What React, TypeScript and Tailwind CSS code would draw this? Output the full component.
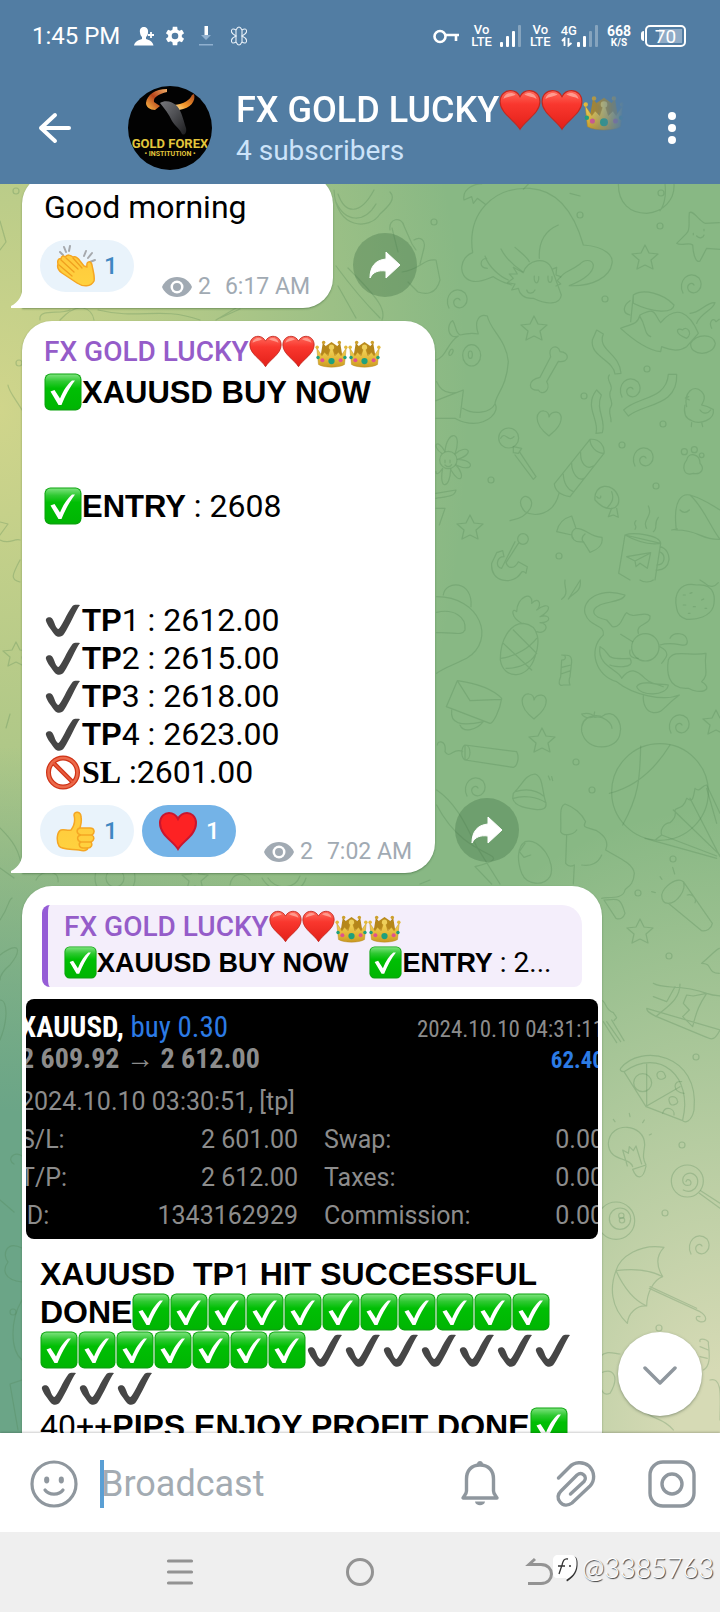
import type { ReactNode } from 'react';

const SANS = "font-['Roboto','Liberation_Sans',sans-serif]";

type EmojiName = 'heart' | 'crown' | 'check' | 'tick' | 'ban';

const emojiArt: Record<EmojiName, ReactNode> = {
  heart: (
    <>
      <path
        d="M19 36.500C14.500 28.500 1 22 1 11.500C1 5 5.500 1.500 10.500 1.500C14.500 1.500 17.500 4 19 7C20.500 4 23.500 1.500 27.500 1.500C32.500 1.500 37 5 37 11.500C37 22 23.500 28.500 19 36.500Z"
        fill="url(#heartFill)"
        stroke="#c2281f"
        strokeWidth="1"
      />
      <path d="M4 9C5 4 11 2 15 5C12 7 7 7 4 9ZM34 9C33 4 27 2 23 5C26 7 31 7 34 9Z" fill="#ffb0a4" opacity=".75" />
    </>
  ),
  crown: (
    <>
      <path d="M12 13L19 8L26 13L23 27H15Z" fill="#b98a1c" />
      <path d="M9 9L16 17L12 27H6ZM29 9L22 17L26 27H32Z" fill="#b5861a" />
      <path
        d="M2 15L8 24L11 20L15 24L18 15H20L23 24L27 20L30 24L36 15L34 34C28 38 10 38 4 34Z"
        fill="url(#goldFill)"
        stroke="#b5851b"
        strokeWidth=".5"
      />
      <circle cx="2.500" cy="14" r="2" fill="#e3b93b" />
      <circle cx="35.500" cy="14" r="2" fill="#e3b93b" />
      <circle cx="10" cy="8.500" r="2" fill="#cda02d" />
      <circle cx="28" cy="8.500" r="2" fill="#cda02d" />
      <circle cx="19" cy="14" r="3" fill="#eecf5b" />
      <circle cx="19" cy="30" r="3.600" fill="#1fa07c" />
      <circle cx="8.500" cy="29" r="2.300" fill="#e0528d" />
      <circle cx="29.500" cy="29" r="2.300" fill="#e0528d" />
      <circle cx="3.500" cy="26" r="2" fill="#1fa07c" />
      <circle cx="34.500" cy="26" r="2" fill="#1fa07c" />
    </>
  ),
  check: (
    <>
      <rect x=".500" y=".500" width="37" height="37" rx="6" fill="#0aa40d" />
      <rect x="1.500" y="1.500" width="35" height="34.500" rx="5" fill="url(#greenFill)" />
      <path d="M6.500 18.500L10.500 17L16 25.500C19.500 17 23.500 11.500 28 7.500H31C26 14 21 23 17.500 32H14.500Z" fill="#fff" />
    </>
  ),
  tick: (
    <path
      d="M2 20C1 16 7 15 8.500 18C10.500 21 12 28 14.500 28C17.500 26 23 12 28.500 5C29.500 3.500 33 3.500 36 4C32 9 25.500 25 20 33C18 36.500 13 36.500 11 34C8 30 3 24 2 20Z"
      fill="#464646"
    />
  ),
  ban: (
    <>
      <circle cx="19" cy="19.500" r="14.500" fill="#fff" stroke="#cf3317" strokeWidth="5" />
      <path d="M9 9.500L29 29.500" stroke="#cf3317" strokeWidth="4.500" />
      <circle cx="19" cy="19.500" r="14.500" fill="none" stroke="#ec6a4b" strokeWidth="2.500" />
      <path d="M9 9.500L29 29.500" stroke="#e8593b" strokeWidth="2" />
    </>
  ),
};

const emojiLabel: Record<EmojiName, string> = {
  heart: 'red heart',
  crown: 'crown',
  check: 'check mark button',
  tick: 'check mark',
  ban: 'prohibited',
};

const emojiSize = {
  sm: 'size-[33px] align-[-7px]',
  md: 'size-[38px] align-[-8px]',
  lg: 'size-[42px] align-[-9px]',
};

function Emoji({ name, size = 'md', count = 1 }: { name: EmojiName; size?: keyof typeof emojiSize; count?: number }) {
  return (
    <>
      {Array.from({ length: count }, (_, i) => (
        <svg key={i} viewBox="0 0 38 38" role="img" aria-label={emojiLabel[name]} className={`inline-block ${emojiSize[size]}`}>
          {emojiArt[name]}
        </svg>
      ))}
    </>
  );
}

function Gradients() {
  return (
    <svg width="0" height="0" className="absolute" aria-hidden="true">
      <defs>
        <linearGradient id="heartFill" x1="0" y1="0" x2="0" y2="1">
          <stop offset="0" stopColor="#ff6a5c" />
          <stop offset=".35" stopColor="#f9372e" />
          <stop offset="1" stopColor="#e32019" />
        </linearGradient>
        <linearGradient id="goldFill" x1="0" y1="0" x2="0" y2="1">
          <stop offset="0" stopColor="#f4d65c" />
          <stop offset=".6" stopColor="#e2b535" />
          <stop offset="1" stopColor="#c99a22" />
        </linearGradient>
        <linearGradient id="greenFill" x1="0" y1="0" x2="0" y2="1">
          <stop offset="0" stopColor="#7be27c" />
          <stop offset=".2" stopColor="#2fc932" />
          <stop offset=".4" stopColor="#00bf04" />
          <stop offset="1" stopColor="#00b503" />
        </linearGradient>
        <linearGradient id="hornLeft" x1="1" y1="0" x2="0" y2="1">
          <stop offset="0" stopColor="#f0b06a" />
          <stop offset=".5" stopColor="#b8441a" />
          <stop offset="1" stopColor="#ffc04a" />
        </linearGradient>
        <linearGradient id="hornRight" x1="1" y1="0" x2="0" y2="1">
          <stop offset="0" stopColor="#a8481c" />
          <stop offset=".6" stopColor="#f59a2c" />
          <stop offset="1" stopColor="#fff0b0" />
        </linearGradient>
        <linearGradient id="bullHead" x1="0" y1="0" x2="1" y2="1">
          <stop offset="0" stopColor="#77787c" />
          <stop offset=".5" stopColor="#4c4d51" />
          <stop offset="1" stopColor="#1c1c1e" />
        </linearGradient>
        <linearGradient id="handFill" x1="0" y1="0" x2="0" y2="1">
          <stop offset="0" stopColor="#ffc93c" />
          <stop offset="1" stopColor="#ffd23f" />
        </linearGradient>
      </defs>
    </svg>
  );
}

function Signal({ bars }: { bars: number }) {
  return (
    <svg viewBox="0 0 22 22" className="size-[22px]" aria-hidden="true">
      {[5, 11, 16, 22].map((h, i) => (
        <rect key={h} x={i * 6} y={22 - h} width="3" height={h} rx="1" fill="#fff" opacity={i < bars ? 1 : 0.3} />
      ))}
    </svg>
  );
}

function VoLte() {
  return (
    <div className="text-center text-[13px] leading-[12px] font-medium">
      <div>Vo</div>
      <div>LTE</div>
    </div>
  );
}

function StatusBar() {
  return (
    <div className="flex h-[72px] items-center pr-[34px] pl-8 text-white">
      <span className="text-2xl">1:45 PM</span>
      <svg viewBox="0 0 20 20" className="ml-3.5 size-5" fill="#fff" aria-hidden="true">
        <path d="M10 1C6.500 1 5.500 3.500 6 6.500C6.200 8.500 7 10 8 11V13C4 14.200 1 15.500 0 19.500H19.500C18.500 15.500 16 14.200 12 13V11C13.200 10 14 8.500 14 6.500C14.500 3.500 13 1 10 1Z" />
        <path d="M17 6V12M14 9H20" stroke="#fff" strokeWidth="1.800" />
      </svg>
      <svg viewBox="0 0 24 24" className="ml-2.5 size-[22px]" fill="#fff" aria-hidden="true">
        <path d="M19.400 13c0-.300.100-.700.100-1s0-.700-.100-1l2.500-1.900-2.300-4-2.900 1.200c-.600-.500-1.200-.900-1.900-1.100L14.400 2H9.600l-.400 3.200c-.700.300-1.300.600-1.900 1.100L4.400 5.100l-2.300 4L4.600 11c0 .300-.100.700-.100 1s0 .700.100 1l-2.500 1.900 2.300 4 2.900-1.200c.600.500 1.200.900 1.900 1.100l.400 3.200h4.800l.400-3.200c.700-.300 1.300-.600 1.900-1.100l2.900 1.200 2.300-4zM12 15.600a3.600 3.600 0 1 1 0-7.200 3.600 3.600 0 0 1 0 7.200z" />
      </svg>
      <svg viewBox="0 0 16 22" className="ml-3 h-[22px] w-4" aria-hidden="true">
        <path d="M6.500 1H10V10H6.500Z" fill="#fff" />
        <path d="M3 10H13L8 15ZM1 19H15V20.500H1Z" fill="#8fb0cf" />
      </svg>
      <svg viewBox="0 0 18 20" className="ml-4 h-5 w-[18px]" fill="none" stroke="#e8f0f8" strokeWidth="1.100" aria-hidden="true">
        <path d="M6 4C7 2 8 1 9 1S11 2 12 4M6 16C7 18 8 19 9 19S11 18 12 16M6 4V16M12 4V16" />
        <path d="M6 4C3 2 1 3 1.500 6C2 8 4 9 6 10C4 11 2 12 1.500 14C1 17 3 18 6 16M12 4C15 2 17 3 16.500 6C16 8 14 9 12 10C14 11 16 12 16.500 14C17 17 15 18 12 16" />
      </svg>
      <svg viewBox="0 0 26 15" className="ml-auto h-[15px] w-[26px]" fill="none" stroke="#fff" strokeWidth="2.600" aria-hidden="true">
        <circle cx="7" cy="7.500" r="5.500" />
        <path d="M12.500 6H26M23 6V12" />
      </svg>
      <div className="ml-3 flex items-center gap-2">
        <VoLte />
        <Signal bars={3} />
        <VoLte />
      </div>
      <div className="ml-2.5 flex items-end">
        <div className="text-[13px] leading-[12px] font-medium">
          <div>4G</div>
          <svg viewBox="0 0 12 10" className="h-2.5 w-3" fill="none" stroke="#fff" strokeWidth="1.800" aria-hidden="true">
            <path d="M1 4L3.500 1.500V9M7.500 1V8.500L10.500 6" />
          </svg>
        </div>
        <Signal bars={2} />
      </div>
      <div className="ml-2 text-center font-bold">
        <div className="text-sm leading-[13px]">668</div>
        <div className="text-[10px] leading-[10px]">K/S</div>
      </div>
      <div className="ml-2.5 flex items-center gap-px">
        <span className="h-2.5 w-[3px] rounded-l-sm bg-white" />
        <span className="flex h-[22px] w-[41px] rounded-[5px] border-2 border-white p-0.5">
          <span className="flex-1 bg-linear-to-r from-transparent from-30% to-[#8fabc6] to-30% text-center text-[19px] leading-4">70</span>
        </span>
      </div>
    </div>
  );
}

function Avatar() {
  return (
    <svg viewBox="0 0 84 84" className="size-[84px] shrink-0 rounded-full" role="img" aria-label="Gold Forex Institution">
      <rect width="84" height="84" fill="#020202" />
      <path d="M39 3C27 3 19 9 18 17C18 21 22 24 27 24L32 20L26 16C25 11 31 8 39 6Z" fill="url(#hornLeft)" />
      <path d="M66 8C68 15 63 22 51 24L46 19C56 18 62 14 64 9Z" fill="url(#hornRight)" />
      <path d="M32 17C37 14 44 15 49 20C54 26 55 33 58 42C59 46 57 50 54 48C52 43 47 40 44 35C41 28 36 22 32 17Z" fill="url(#bullHead)" />
      <text x="42" y="62" textAnchor="middle" fontSize="13" fontWeight="700" fill="#e3c63c" fontFamily="Roboto, sans-serif">
        GOLD FOREX
      </text>
      <text x="42" y="70" textAnchor="middle" fontSize="7" fontWeight="700" fill="#e3c63c" fontFamily="Roboto, sans-serif">
        • INSTITUTION •
      </text>
    </svg>
  );
}

function Header() {
  return (
    <header className="shrink-0 bg-[#527da3]">
      <StatusBar />
      <div className="flex h-28 items-center pl-[38px]">
        <button aria-label="Back" className="text-white">
          <svg viewBox="0 0 34 32" className="h-8 w-[34px]" fill="none" stroke="#fff" strokeWidth="4" strokeLinecap="round" strokeLinejoin="round">
            <path d="M17 3L3 16L17 29M3 16H31" />
          </svg>
        </button>
        <div className="ml-14">
          <Avatar />
        </div>
        <div className="mt-1 ml-6 min-w-0 flex-1">
          <h1 className="max-w-[392px] overflow-hidden mask-r-from-90% text-[36px] leading-[42px] font-medium whitespace-nowrap text-white">
            FX GOLD LUCKY
            <Emoji name="heart" size="lg" count={2} />
            <Emoji name="crown" size="lg" count={2} />
          </h1>
          <p className="text-[28px] leading-10 text-[#cce3f9]">4 subscribers</p>
        </div>
        <button aria-label="More options" className="px-11">
          <svg viewBox="0 0 8 34" className="h-[34px] w-2" fill="#fff">
            <circle cx="4" cy="5" r="4" />
            <circle cx="4" cy="17" r="4" />
            <circle cx="4" cy="29" r="4" />
          </svg>
        </button>
      </div>
    </header>
  );
}

const star = 'M0-12L4-4L13-3L6 3L8 12L0 8L-8 12L-6 3L-13-3L-4-4Z';
const swirl = 'M-7 8C-13-4-1-16 9-7C15 2 6 12-1 6C-5 0 2-4 4 0';
const blossom = 'M0 12C-18-2-12-14-5-13C-1-13 0-9 0-7C2-14 14-14 12-4C11 4 4 8 0 12Z';

const stars = [[645, 257], [534, 328], [470, 527], [542, 740], [640, 931], [16, 654], [195, 878], [716, 722]];
const swirls = [[456, 300], [690, 285], [629, 389], [642, 458], [678, 725], [474, 788], [698, 1246]];
const dots = [[434, 222], [580, 215], [660, 226], [605, 299], [491, 480], [656, 486], [663, 424], [622, 445], [647, 369], [584, 396], [559, 556], [576, 762], [592, 790], [661, 193], [673, 859], [638, 893], [669, 956], [696, 1057], [682, 1145], [665, 1213], [659, 1328], [16, 191], [19, 363], [13, 1312]];

function Doodles() {
  return (
    <svg
      viewBox="0 184 720 1249"
      preserveAspectRatio="xMidYMid slice"
      className="absolute inset-0 size-full"
      fill="none"
      stroke="#4f8250"
      strokeOpacity=".27"
      strokeWidth="1.200"
      strokeLinecap="round"
      strokeLinejoin="round"
      aria-hidden="true"
    >
      {stars.map(([x, y]) => (
        <path key={`s${x}-${y}`} d={star} transform={`translate(${x} ${y})`} />
      ))}
      {swirls.map(([x, y]) => (
        <path key={`w${x}-${y}`} d={swirl} transform={`translate(${x} ${y})`} />
      ))}
      {dots.map(([x, y]) => (
        <circle key={`d${x}-${y}`} cx={x} cy={y} r="3" />
      ))}
      <path d={blossom} transform="translate(549 424)" />
      <path d={blossom} transform="translate(534 707)" />
      {/* right of the first two messages */}
      <g transform="translate(400 180) scale(.33333)" strokeWidth="3.600">
        <path d="M218 218C200 100 280 20 390 25C470 30 520 90 550 195C620 200 640 230 636 250C630 290 580 320 508 317C550 300 580 280 580 255C575 235 550 240 540 252C510 275 490 275 482 292M218 218C180 230 170 290 215 303C240 310 265 295 280 290C300 305 320 310 335 315M255 228C265 260 300 290 325 300M418 235C415 180 440 150 475 135M303 207C320 240 345 260 368 275M345 202C365 220 380 230 388 245M260 235C240 235 235 265 262 265" />
        <path d="M370 278C380 240 440 225 456 268L484 345C480 375 440 375 400 355C370 358 358 340 355 325L335 330L345 312L322 308L340 295L328 282L352 282L340 262L370 278ZM456 268L470 262L468 285L482 290L472 302L482 312L468 318M403 288C400 315 418 315 416 290M444 288C442 315 458 312 456 290M380 330C385 345 400 340 405 330" />
        <path d="M655 12C655 70 690 100 740 100C790 95 825 60 822 12M795 12C800 50 790 80 780 92M192 60C185 20 235 10 245 12M192 60L215 50L220 70L232 55L255 72M370 28L385 12M510 40L540 48" />
        <path d="M868 98C880 90 895 120 915 130L958 128M868 98C865 130 872 150 860 160L830 190C845 200 865 185 878 195C880 230 890 250 900 243L920 205L960 208M880 160V164M912 148V152M890 168C900 178 910 172 912 165" />
        <path d="M700 345C730 325 790 340 822 375C820 400 760 400 700 370ZM700 345L692 425M690 362C670 375 665 400 690 405M662 445C690 430 710 440 720 405C770 380 760 400 782 428C830 370 870 400 895 460L860 500C830 520 800 505 785 500L782 515C740 510 700 480 662 445ZM720 410C740 440 730 460 752 470M870 400C900 400 920 365 945 368C940 390 900 400 890 430M872 490C890 460 940 460 946 490C940 530 870 530 872 490ZM860 475C820 460 830 440 848 450C860 435 880 460 860 475ZM935 445C925 425 940 410 948 425L958 418" />
        <path d="M108 540C140 530 140 490 175 468C140 480 140 430 158 422C170 440 165 455 180 465C200 460 225 460 235 462C220 420 240 400 262 408C270 450 320 480 325 545C320 620 290 640 285 670C300 700 260 730 220 730C190 730 175 720 165 715H108M110 605C130 650 170 640 190 630L108 662M190 632L180 712M188 685C220 705 270 700 285 672" />
        <ellipse cx="215" cy="526" rx="27" ry="32" />
        <ellipse cx="211" cy="524" rx="6" ry="11" />
        <ellipse cx="153" cy="517" rx="5" ry="10" transform="rotate(25 153 517)" />
        <path d="M420 592L452 530C440 500 475 490 480 515C510 515 510 550 475 544L440 605C455 630 425 650 415 630C385 635 380 600 420 592Z" />
        <path d="M590 450L610 462C590 510 660 520 663 580L645 582C640 540 570 530 577 480ZM805 583H830C835 680 730 670 685 708L671 690C710 650 800 660 805 583ZM590 630L604 645C585 690 620 720 607 758L588 760C600 720 550 680 590 630ZM628 585C615 600 642 615 632 632C622 650 642 665 633 680C622 695 635 710 633 725" />
        <path d="M463 912L570 778C600 775 615 800 612 820L510 950C480 945 465 930 463 912ZM570 778C570 800 590 820 612 820M542 818C540 850 560 870 580 858M515 850C515 880 535 905 552 895M490 882C490 910 505 930 520 935M477 940C460 1010 400 1010 375 995C350 970 365 945 380 950C410 960 395 1010 330 1022" />
        <circle cx="326" cy="774" r="30" />
        <path d="M302 775C315 750 325 790 342 770M340 800L365 805L355 820L340 818ZM345 825L400 898L408 890L358 815" />
        <circle cx="145" cy="840" r="26" />
        <path d="M125 820C95 800 110 770 135 815C140 750 190 750 165 822C200 790 230 820 172 838C230 840 220 880 168 855C200 890 180 920 152 868C150 930 115 930 128 865C110 890 108 880 108 875M108 940L168 930C165 950 140 950 108 955M108 985H135L118 1035M135 840V848M150 840V848M135 855C142 862 150 862 155 854" />
        <path d="M860 680C850 640 880 610 905 635C920 650 910 665 905 675C930 680 940 690 940 688C945 720 900 735 875 722C855 715 850 700 855 675M866 650L856 654L868 660M900 690C910 705 925 700 932 690M875 728L874 740M905 728L908 740" />
        <path d="M860 840C865 815 900 820 900 850C915 865 905 885 880 880C850 890 845 860 860 840Z" />
        <circle cx="853" cy="815" r="9" />
        <circle cx="883" cy="809" r="9" />
        <circle cx="905" cy="826" r="7" />
        <path d="M585 960C580 910 640 905 655 950C665 990 620 1000 585 960ZM635 985L625 1010L640 1005L655 1012L650 985M635 935C645 960 630 975 620 985M590 950C596 958 604 955 602 948" />
        <path d="M515 1008L528 1045C560 1045 565 1070 606 1072C610 1095 590 1110 570 1117L550 1085C520 1090 515 1070 515 1065L470 1055C475 1030 490 1015 515 1008ZM528 1045C510 1055 515 1070 520 1075M555 1062C545 1070 545 1080 550 1088" />
        <path d="M675 1065L782 1090L765 1200M675 1065L656 1180L690 1200M675 1065C700 1055 780 1065 782 1090C750 1095 720 1090 675 1065ZM780 1100C820 1110 815 1175 768 1170M778 1115C800 1125 795 1155 770 1155M680 1130L752 1118L742 1165L720 1150L708 1160L705 1143ZM705 1143L750 1120M740 1045C725 1020 760 1010 745 978M705 1048C715 1035 695 1035 708 1022M760 1055C775 1045 760 1030 775 1012" />
        <path d="M815 1050C845 1045 825 1050 828 1040C820 960 845 940 870 945C920 960 940 980 960 990M870 945C910 980 930 1040 960 1078C900 1080 900 1050 828 1050M840 990C850 1000 860 998 868 990" />
        <path d="M355 1090L318 1148C325 1170 345 1165 355 1145L382 1160L378 1180C370 1172 365 1175 362 1180C340 1215 270 1210 275 1150L290 1118L308 1112L312 1130C290 1130 285 1160 305 1165L345 1085" />
        <circle cx="369" cy="1077" r="16" />
      </g>
      {/* right, halfway down */}
      <g transform="translate(400 580) scale(.33333)" strokeWidth="3.600">
        <path d="M130 45C135 0 220 0 213 80M110 50C240 50 290 180 200 235C160 255 130 265 110 280M110 97C160 85 200 110 195 150C185 170 160 155 110 158" />
        <path d="M370 130C420 135 420 190 405 230C385 300 310 300 301 240C300 180 330 130 370 130ZM310 190L395 270M340 150L410 220M302 235C350 230 390 200 410 175M318 265C360 265 395 245 405 225M365 130C330 110 335 80 350 95C350 50 400 30 395 70C420 45 425 80 410 90C450 60 460 90 420 110C455 100 455 130 420 128C450 130 440 165 410 155" />
        <path d="M485 225C500 225 500 240 485 240L482 290C475 305 475 320 490 315L510 315C505 300 510 290 510 290L515 245C515 225 505 225 485 225ZM485 262L513 255M483 282L512 272" />
        <path d="M172 302C230 310 280 330 305 355C300 390 280 430 270 430L139 380ZM172 302L210 362L305 358M155 390C150 430 180 440 250 425M180 435C190 460 230 450 250 425" />
        <path d="M195 495L350 515C360 535 350 560 340 562L195 540ZM195 495C215 495 215 540 195 540C180 530 185 500 195 495ZM188 515C160 500 150 540 135 515C140 480 112 480 112 495" />
        <path d="M545 455C540 400 600 405 605 410C640 380 670 430 660 460C655 510 560 520 545 455ZM584 410C560 418 550 410 545 402C560 398 575 400 584 410C582 405 582 400 584 396M584 412C610 405 635 430 636 445" />
        <path d="M340 640C370 610 375 585 405 582C430 590 425 630 438 670C440 685 430 690 410 689C380 685 345 680 338 655ZM345 635C380 625 410 630 433 650M340 655C370 645 410 650 438 668M445 588L450 600M455 590L458 602" />
        <path d="M675 45C670 65 620 65 600 75C570 90 575 110 620 120L637 140C665 145 668 105 680 98C700 120 735 90 750 108C755 135 705 130 715 160M675 45C600 20 545 60 555 100C570 145 615 130 610 165C560 210 590 290 650 305C700 345 790 365 838 345C790 380 790 400 760 398C740 395 728 375 730 345" />
        <circle cx="736" cy="202" r="41" />
        <path d="M662 163L698 185M780 195C830 180 860 210 862 185C860 155 820 155 810 175M600 200C640 220 600 240 690 235C710 270 640 260 630 255M600 200C590 260 660 270 665 295M805 240C820 205 870 230 918 220C910 270 930 280 905 305C945 330 900 345 865 325C800 330 800 270 805 240ZM690 210C685 230 700 235 715 235M665 295C690 260 710 270 735 295C760 320 790 310 805 315C800 350 720 350 710 320C720 300 770 310 790 320M780 200C820 220 790 240 785 250" />
        <path d="M830 85C820 40 840 5 890 15C950 10 945 60 940 80C930 110 890 120 860 118C840 112 832 100 830 85ZM915 10L900 0M915 10C930 25 945 20 955 8M485 58C510 40 490 20 495 0M541 0C545 40 515 40 505 57ZM850 45H856M870 40L876 38M905 60L911 57M850 75H857M880 80H886M865 100H870M915 85H920" />
        <circle cx="780" cy="636" r="145" />
        <path d="M722 498C720 600 715 650 668 735M810 495C770 560 710 620 628 640M920 615C905 615 900 640 885 625C880 650 880 670 860 655C850 690 830 680 825 690C830 710 820 720 810 728C790 730 780 750 785 765L768 778M920 615L960 700M870 655L960 830M820 690L960 825M785 765L950 828M735 775L950 835M920 625L950 730" />
        <path d="M482 755C485 720 475 680 495 672C520 680 545 700 557 725C545 745 560 740 590 752C620 770 625 790 617 810C650 830 700 850 703 880C700 920 680 920 675 930C670 960 620 950 605 955M482 755C490 770 520 765 530 750M500 765L497 850C505 860 515 860 523 855L520 912M545 855C570 860 595 850 605 825M612 960C650 960 660 945 675 1000C670 1015 660 1020 648 1015Z" />
        <path d="M375 785C420 770 470 850 450 890C430 920 380 915 365 880C350 840 352 800 375 785ZM375 790L358 815L372 832L392 825M110 630C170 670 200 740 230 800L300 912M110 675C160 770 220 800 270 825C300 840 260 850 225 860L275 912" />
        <path d="M785 945C790 920 830 890 850 905L937 1030C935 1045 920 1055 905 1052L805 970C790 970 785 960 785 945ZM850 905C860 930 830 970 805 970M862 945C880 940 890 960 885 968M780 890L786 898M818 862L824 882M755 935L766 938" />
        <path d="M720 0C730 8 750 8 760 0M905 1150C930 1130 945 1110 958 1105M905 1150C940 1150 920 1180 958 1180" />
      </g>
      {/* right, next to the scroll button */}
      <g transform="translate(600 980) scale(.33333)" strokeWidth="3.600">
        <path d="M160 10C190 30 240 10 320 40C350 50 355 45 360 48M360 150C345 180 335 180 320 172L170 110C140 95 140 90 140 85ZM240 12C240 60 200 80 168 110M160 50L200 65L225 20M260 45L280 48L320 40C300 70 290 90 278 140L248 110L268 90L250 70ZM8 62C20 70 15 90 40 98C55 120 50 110 42 122M20 125L62 185M35 120L72 182M10 125L50 188" />
        <path d="M62 265C120 190 300 220 282 390C275 425 255 430 248 422L138 380L72 275C60 275 60 268 62 265ZM72 275C180 200 280 290 248 420M140 252V378L240 320" />
        <circle cx="128" cy="308" r="27" />
        <path d="M172 290C165 275 190 265 195 285C205 295 175 305 172 290ZM208 365C200 345 230 345 232 362C240 370 210 385 208 365ZM245 305C220 300 215 335 252 340M188 400C195 375 225 385 222 405" />
        <path d="M98 560C90 530 25 545 25 490C30 420 135 430 134 495C132 520 125 530 138 555L98 568C110 600 130 600 138 558M82 558L68 510L85 520L88 500L100 512L108 498L125 552M45 425L40 418M90 410L88 400M128 428L133 420M148 465L154 462" />
        <circle cx="262" cy="603" r="48" />
        <path d="M258 605C262 590 280 605 270 615C240 625 240 575 275 580C310 590 290 650 250 630M302 632L360 670M298 640L360 685" />
        <circle cx="48" cy="722" r="56" />
        <circle cx="60" cy="716" r="32" />
        <circle cx="64" cy="707" r="8" />
        <circle cx="66" cy="721" r="8" />
        <path d="M192 802C120 790 60 830 48 872C30 920 30 980 82 1030C85 1000 110 975 140 978C140 940 160 900 188 890C170 860 165 830 192 802ZM48 872C100 865 150 870 188 890M48 872C70 920 100 960 140 978M148 925L300 995C325 1010 320 1030 300 1025C285 1020 285 1005 300 1010M150 920L290 985" />
        <path d="M300 1085C295 1070 330 1080 325 1090C330 1130 330 1160 310 1170M300 1100L325 1110M300 1130L322 1135M0 1130C20 1110 40 1120 60 1122M0 1180C40 1160 60 1190 30 1240C10 1250 0 1230 0 1200M330 1200C370 1190 360 1260 360 1320M120 1260C140 1330 180 1300 220 1350" />
      </g>
      {/* left edge and gaps between the messages */}
      <path d="M0 221L6 242L0 250M0 522L8 524L0 535M0 540C10 545 14 538 20 540M20 560C12 575 10 580 20 582M10 714L6 728M0 828C12 840 20 850 22 870M0 868L14 878M0 920C10 905 8 900 12 898M0 955C20 940 22 950 10 965C4 970 0 975 0 980M0 1000C8 1000 8 1020 0 1040M0 1200L14 1212M14 1164C6 1160 14 1150 22 1156M22 1248C6 1240 2 1255 8 1262C2 1270 4 1280 22 1282M22 1300C10 1320 10 1350 22 1360M22 1380L10 1384L18 1430M22 410C16 400 8 390 8 385" />
      <path d="M40 320C38 308 60 315 70 310M60 320C78 300 92 308 94 320M98 310C140 320 160 306 200 320M216 320L236 308M220 318L240 309M336 266C350 285 370 308 380 318M338 286L356 318M348 268C380 300 386 310 382 320M334 190C336 230 370 230 380 214C390 205 396 198 390 192M338 194C345 214 360 216 374 190M336 202C345 222 364 224 376 204" />
      <circle cx="115" cy="878" r="9" />
      <circle cx="115" cy="878" r="20" />
      <path d="M36 880C42 868 60 870 58 882M230 885C232 872 244 872 250 880M268 878C276 890 295 890 300 876M262 878C272 896 300 898 306 878M420 884L430 880" />
      <path d="M390 230C388 218 402 216 404 226L412 244L416 250M392 228L398 252M414 240C420 236 426 240 424 248L420 264M402 272C420 270 424 258 436 260L440 280C436 296 424 294 418 292L408 282" />
    </svg>
  );
}

const boldSize = {
  reply: 'text-[27px]',
  body: 'text-[31px]',
  caption: 'text-[32px]',
};

function Bold({ size = 'body', children }: { size?: keyof typeof boldSize; children: ReactNode }) {
  return <b className={`font-['Liberation_Sans',Arial,sans-serif] leading-none ${boldSize[size]}`}>{children}</b>;
}

function ChannelName() {
  return (
    <span className="font-medium text-[#955cc9]">
      FX GOLD LUCKY
      <Emoji name="heart" size="sm" count={2} />
      <Emoji name="crown" size="sm" count={2} />
    </span>
  );
}

function ClapIcon() {
  return (
    <svg viewBox="0 0 40 42" className="h-[42px] w-10" aria-hidden="true">
      <path d="M4 7L7 10M8 2L10 7M14 1L13 6M28 11L30 6M32 13L36 8M34 17L39 15" stroke="#a6a9ad" strokeWidth="2" strokeLinecap="round" />
      <path
        d="M9 12C12 9 14 10 17 12C20 11 22 13 24 16L28 21L31 22C30 16 35 15 36 20C37 26 39 31 38 36C35 42 27 42 21 38L6 28C2 25 1 22 2 19C1 15 3 13 5 14C5 11 8 10 9 12Z"
        fill="url(#handFill)"
        stroke="#f5a623"
        strokeWidth="1.500"
        strokeLinejoin="round"
      />
      <path d="M5 15L18 27M3 20L16 31M10 13L22 24M17 13L26 23" stroke="#f0a01f" strokeWidth="1.300" strokeLinecap="round" />
    </svg>
  );
}

function ThumbIcon() {
  return (
    <svg viewBox="0 0 40 42" className="h-[42px] w-10" fill="url(#handFill)" stroke="#f5a623" strokeWidth="1.500" strokeLinejoin="round" aria-hidden="true">
      <path d="M15 20C19 15 19 9 18 5C18 1 25 1 25 7C26 11 25 14 24 18H34C39 18 39 23 36 25C39 27 38 31 35 32C37 35 35 38 32 38C31 41 27 41 23 40C16 39 6 40 3 36C0 30 1 22 5 20C8 19 12 21 15 20Z" />
      <path d="M24 18C20 19 20 24 25 25H36M25 25C20 26 21 31 25 32H35M25 32C22 33 23 38 27 38H32" fill="none" />
    </svg>
  );
}

function HeartIcon() {
  return (
    <svg viewBox="0 0 40 42" className="h-[42px] w-10" aria-hidden="true">
      <path
        d="M20 39C15 31 2 25 2 13C2 6 7 3 11 3C15 3 18 5 20 9C22 5 25 3 29 3C33 3 38 6 38 13C38 25 25 31 20 39Z"
        fill="#fd2223"
        stroke="#c8162f"
        strokeWidth="2"
      />
    </svg>
  );
}

function Reaction({ icon, label, active = false }: { icon: ReactNode; label: string; active?: boolean }) {
  return (
    <button
      aria-label={label}
      className={`mb-[7px] flex h-[52px] w-[94px] items-center rounded-full pl-4 text-2xl font-medium ${
        active ? 'bg-[#74b3e7] text-white' : 'bg-[#e9f3fb] text-[#3f87c2]'
      }`}
    >
      {icon}
      <span className="ml-2">1</span>
    </button>
  );
}

function Meta({ time }: { time: string }) {
  return (
    <div className="ml-5 flex items-center text-[23px] leading-6 text-[#a1aab3]">
      <svg viewBox="0 0 30 20" className="h-5 w-[30px]" aria-hidden="true">
        <path d="M15 0C8 0 2.500 4 0 10C2.500 16 8 20 15 20S27.500 16 30 10C27.500 4 22 0 15 0Z" fill="#a1aab3" />
        <circle cx="15" cy="10" r="6.500" fill="#fff" />
        <circle cx="15" cy="10" r="4" fill="#a1aab3" />
      </svg>
      <span className="ml-1.5">2</span>
      <time className="ml-3.5">{time}</time>
    </div>
  );
}

function ShareButton() {
  return (
    <button aria-label="Share" className="mb-[11px] ml-5 flex size-16 items-center justify-center rounded-full bg-[#3f6f45]/35">
      <svg viewBox="0 0 32 28" className="h-7 w-8" fill="#fff">
        <path d="M17 1L31 14L17 27V20C9 19 4 21 1 27C1 16 6 9 17 8Z" stroke="#fff" strokeLinejoin="round" />
      </svg>
    </button>
  );
}

const bubble = 'relative rounded-[30px] rounded-bl-none bg-white shadow-[0_1px_2px_rgba(40,80,40,0.45)]';

function Tail() {
  return (
    <svg viewBox="0 0 12 22" className="absolute bottom-0 -left-[11px] h-[22px] w-3" fill="#fff" aria-hidden="true">
      <path d="M12 0C11 10 8 16 0 20V22H12Z" />
    </svg>
  );
}

const targets = ['2612.00', '2615.00', '2618.00', '2623.00'];

function SignalMessage() {
  return (
    <article className="flex items-end">
      <div className={`${bubble} pt-2.5 pr-[23px] pb-[9px] pl-[18px]`}>
        <Tail />
        <div className="pl-1">
          <h2 className="text-[28px] leading-[42px]">
            <ChannelName />
          </h2>
          <div className="text-[32px] leading-[38px]">
            <p>
              <Emoji name="check" />
              <Bold>XAUUSD BUY NOW</Bold>
            </p>
            <br />
            <br />
            <p>
              <Emoji name="check" />
              <Bold>ENTRY</Bold> : 2608
            </p>
            <br />
            <br />
            {targets.map((price, i) => (
              <p key={price}>
                <Emoji name="tick" />
                <Bold>TP</Bold>
                {i + 1} : {price}
              </p>
            ))}
            <p>
              <Emoji name="ban" />
              <b className="font-['Liberation_Serif',serif] text-[32px] leading-none">SL</b> :2601.00
            </p>
          </div>
        </div>
        <div className="mt-3.5 flex items-end gap-2">
          <Reaction icon={<ThumbIcon />} label="Thumbs up, 1" />
          <Reaction icon={<HeartIcon />} label="Heart, 1" active />
          <Meta time="7:02 AM" />
        </div>
      </div>
      <ShareButton />
    </article>
  );
}

const dealRows = [
  ['S/L:', '2 601.00', 'Swap:', '0.00'],
  ['T/P:', '2 612.00', 'Taxes:', '0.00'],
  ['ID:', '1343162929', 'Commission:', '0.00'],
];

function TradePhoto() {
  return (
    <div className="mx-1 mt-3 h-60 overflow-hidden rounded-lg bg-black pt-3 text-[#8c8c8c]">
      <div className="-mx-1.5 font-['Roboto_Condensed','Liberation_Sans_Narrow','Roboto',sans-serif]">
        <div className="flex h-8 items-baseline justify-between text-[29px] leading-8 whitespace-nowrap">
          <span className="text-[#2c7be5]">
            <b className="text-white">XAUUSD,</b> buy 0.30
          </span>
          <span className="text-[23px] leading-8">2024.10.10 04:31:11</span>
        </div>
        <div className="flex h-8 items-baseline justify-between text-[28px] leading-8 font-bold whitespace-nowrap">
          <span>2 609.92 → 2 612.00</span>
          <span className="text-[23px] leading-8 text-[#2c7be5]">62.40</span>
        </div>
      </div>
      <div className="-mx-1.5 mt-2 text-[25px] leading-[38px]">
        <p>2024.10.10 03:30:51, [tp]</p>
        <table className="w-full">
          <tbody>
            {dealRows.map(([name, value, fee, amount]) => (
              <tr key={name}>
                <td className="w-[78px]">{name}</td>
                <td className="w-[200px] text-right">{value}</td>
                <td className="pl-[26px]">{fee}</td>
                <td className="text-right">{amount}</td>
              </tr>
            ))}
          </tbody>
        </table>
      </div>
    </div>
  );
}

function ResultMessage() {
  return (
    <article className={`${bubble} mr-[118px] pt-[19px] pb-8`}>
      <blockquote className="mx-5 overflow-hidden rounded-lg rounded-tr-[20px] border-l-6 border-[#955cd6] bg-[#f4eefb] pt-1 pr-4 pb-1.5 pl-4 text-[28px] leading-9">
        <p>
          <ChannelName />
        </p>
        <p className="truncate whitespace-pre">
          <Emoji name="check" size="sm" />
          <Bold size="reply">XAUUSD BUY NOW</Bold>
          {'   '}
          <Emoji name="check" size="sm" />
          <Bold size="reply">ENTRY</Bold> : 2...
        </p>
      </blockquote>
      <TradePhoto />
      <p className="mt-4 pr-[18px] pl-[18px] text-[32px] leading-[38px]">
        <Bold size="caption">XAUUSD&nbsp; TP</Bold>1 <Bold size="caption">HIT SUCCESSFUL DONE</Bold>
        <Emoji name="check" count={18} />
        <Emoji name="tick" count={10} />
        <br />
        40++<Bold size="caption">PIPS ENJOY PROFIT DONE</Bold>
        <Emoji name="check" />
      </p>
    </article>
  );
}

function Chat() {
  return (
    <main className="relative min-h-0 flex-1 overflow-hidden bg-[#88b884] bg-[radial-gradient(60%_50%_at_100%_100%,#d6dab5_10%,transparent),radial-gradient(60%_45%_at_0%_90%,#6ba587_35%,transparent),radial-gradient(65%_60%_at_0%_18%,#d0d58b_0%,transparent)]">
      <Doodles />
      <div className="relative -mt-2.5 flex flex-col gap-[13px] pl-[22px]">
        <article className="flex items-end">
          <div className={`${bubble} pt-3.5 pr-[23px] pb-[9px] pl-[18px]`}>
            <Tail />
            <p className="pl-1 text-[32px] leading-[38px]">Good morning</p>
            <div className="mt-3.5 flex items-end gap-2">
              <Reaction icon={<ClapIcon />} label="Clapping hands, 1" />
              <Meta time="6:17 AM" />
            </div>
          </div>
          <ShareButton />
        </article>
        <SignalMessage />
        <ResultMessage />
      </div>
      <button
        aria-label="Scroll to bottom"
        className="absolute right-[18px] bottom-[17px] flex size-[84px] items-center justify-center rounded-full bg-white shadow-[0_1px_3px_rgba(60,80,60,0.5)]"
      >
        <svg viewBox="0 0 34 20" className="mt-1 h-5 w-[34px]" fill="none" stroke="#8f979e" strokeWidth="3.500" strokeLinecap="round" strokeLinejoin="round">
          <path d="M2 2L17 17L32 2" />
        </svg>
      </button>
    </main>
  );
}

function Composer() {
  return (
    <form className="relative flex h-[99px] shrink-0 items-center bg-white pt-0.5 pr-6 pl-[30px] text-[#8f979e] shadow-[0_-1px_2px_rgba(0,0,0,0.2)]">
      <button type="button" aria-label="Emoji">
        <svg viewBox="0 0 48 48" className="size-12" fill="none" stroke="currentColor" strokeWidth="3.200" strokeLinecap="round">
          <circle cx="24" cy="24" r="22" />
          <path d="M15 30C19 35.500 29 35.500 33 30" />
          <ellipse cx="16.700" cy="20" rx="2.600" ry="3.400" fill="currentColor" stroke="none" />
          <ellipse cx="31.300" cy="20" rx="2.600" ry="3.400" fill="currentColor" stroke="none" />
        </svg>
      </button>
      <input
        aria-label="Broadcast"
        placeholder="Broadcast"
        className="ml-[22px] h-12 min-w-0 flex-1 border-l-4 border-[#5a9fd4] -indent-[3px] text-[36px] text-black outline-none placeholder:text-[#a3abb2]"
      />
      <div className="flex items-center gap-12">
        <button type="button" aria-label="Notifications">
          <svg viewBox="0 0 48 48" className="size-12" fill="none" stroke="currentColor" strokeWidth="3.400" strokeLinejoin="round">
            <path d="M24 5C15 5 10.500 11 10.500 19V31C10.500 34 8 35.500 7 38H41C40 35.500 37.500 34 37.500 31V19C37.500 11 33 5 24 5Z" />
            <path d="M21 4C21 0 27 0 27 4V6H21ZM19 41.500H29C28.500 46.500 19.500 46.500 19 41.500Z" fill="currentColor" stroke="none" />
          </svg>
        </button>
        <button type="button" aria-label="Attach">
          <svg viewBox="0 0 48 48" className="size-12" fill="none" stroke="currentColor" strokeWidth="3.400" strokeLinecap="round">
            <path d="M6.500 18L17.500 7C22 2 31 1 37 6C43 12 43 21 38 26L20 43C16 46 11 46 8 42C5 38 6 34 9 31L25 15C30 11 36 17 32 21.500L18.500 34" />
          </svg>
        </button>
        <button type="button" aria-label="Camera">
          <svg viewBox="0 0 48 48" className="size-12" fill="none" stroke="currentColor" strokeWidth="3.400">
            <rect x="2" y="2" width="44" height="44" rx="13" />
            <circle cx="24" cy="24" r="10" />
          </svg>
        </button>
      </div>
    </form>
  );
}

function NavBar() {
  return (
    <nav className="relative flex h-20 shrink-0 items-center justify-center gap-[150px] bg-[#efefef]">
      <button aria-label="Recent apps">
        <svg viewBox="0 0 30 30" className="size-[30px]" stroke="#939393" strokeWidth="3.200" strokeLinecap="round">
          <path d="M3.500 4H26.500M3.500 15H26.500M3.500 26H26.500" />
        </svg>
      </button>
      <button aria-label="Home">
        <svg viewBox="0 0 30 30" className="size-[30px]" fill="none" stroke="#939393" strokeWidth="3">
          <circle cx="15" cy="15" r="12.500" />
        </svg>
      </button>
      <button aria-label="Back">
        <svg viewBox="0 0 30 30" className="size-[30px]" fill="none" stroke="#939393" strokeWidth="3">
          <path d="M10 2L4 7.500H16C30 7.500 30 26.500 16 26.500H3" />
        </svg>
      </button>
      <div className="absolute right-1.5 bottom-[26px] flex items-center gap-1">
        <svg viewBox="0 0 26 28" className="h-7 w-[26px]" aria-hidden="true">
          <path d="M7 2H20C25 2 26 6 25.500 12C25 20 20 24 15 27.500L13 23H7C3 23 2 20 2 16V7C2 4 4 2 7 2Z" fill="#333" />
          <path d="M6 1H19C23 1 25 4 24.500 11C24 19 19 23 14 26L13 24H6C2 24 1 22 1 18V6C1 3 3 1 6 1Z" fill="#fff" />
          <path d="M16 5C12 4 11 7 10 11L7 20M6 12H13M17 12H19" stroke="#333" strokeWidth="1.300" fill="none" />
        </svg>
        <span className="font-['Lato','Open_Sans',sans-serif] text-[27px] leading-9 font-light text-white [text-shadow:1px_1px_1px_#333]">
          @3385763
        </span>
      </div>
    </nav>
  );
}

export default function App() {
  return (
    <div className={`flex h-screen flex-col overflow-hidden text-black ${SANS}`}>
      <Gradients />
      <Header />
      <Chat />
      <Composer />
      <NavBar />
    </div>
  );
}
